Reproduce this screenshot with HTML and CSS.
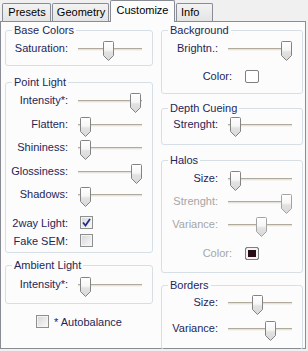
FILE: index.html
```html
<!DOCTYPE html>
<html lang="en">
<head>
    <meta charset="UTF-8">
    <meta name="viewport" content="width=device-width, initial-scale=1.0">
    <title>Customize</title>
    <link rel="stylesheet" href="styles.css">
</head>
<body>
    <!-- shared gradient for slider thumbs -->
    <svg class="defs" width="0" height="0">
        <defs>
            <linearGradient id="thumbFill" x1="0" y1="0" x2="0" y2="1">
                <stop offset="0" stop-color="#ffffff"/>
                <stop offset="0.45" stop-color="#f6f6f6"/>
                <stop offset="0.55" stop-color="#e2e2e2"/>
                <stop offset="1" stop-color="#d8d8d8"/>
            </linearGradient>
        </defs>
    </svg>

    <div class="tabs">
        <div class="tab tab-presets">Presets</div>
        <div class="tab tab-geometry">Geometry</div>
        <div class="tab tab-customize active">Customize</div>
        <div class="tab tab-info">Info</div>
    </div>

    <div class="panel">
        <div class="col col-left">
            <fieldset class="group g-base">
                <legend>Base Colors</legend>
                <div class="row"><label>Saturation:</label><div class="slider" style="--v:0.45"><span class="thumb"><svg width="11" height="20"><path d="M1.5 .5h8a1 1 0 0 1 1 1V14.5l-5 5-5-5V1.5a1 1 0 0 1 1-1z"/></svg></span></div></div>
            </fieldset>

            <fieldset class="group g-point">
                <legend>Point Light</legend>
                <div class="row"><label>Intensity*:</label><div class="slider" style="--v:0.98"><span class="thumb"><svg width="11" height="20"><path d="M1.5 .5h8a1 1 0 0 1 1 1V14.5l-5 5-5-5V1.5a1 1 0 0 1 1-1z"/></svg></span></div></div>
                <div class="row"><label>Flatten:</label><div class="slider" style="--v:0"><span class="thumb"><svg width="11" height="20"><path d="M1.5 .5h8a1 1 0 0 1 1 1V14.5l-5 5-5-5V1.5a1 1 0 0 1 1-1z"/></svg></span></div></div>
                <div class="row"><label>Shininess:</label><div class="slider" style="--v:0"><span class="thumb"><svg width="11" height="20"><path d="M1.5 .5h8a1 1 0 0 1 1 1V14.5l-5 5-5-5V1.5a1 1 0 0 1 1-1z"/></svg></span></div></div>
                <div class="row"><label>Glossiness:</label><div class="slider" style="--v:1"><span class="thumb"><svg width="11" height="20"><path d="M1.5 .5h8a1 1 0 0 1 1 1V14.5l-5 5-5-5V1.5a1 1 0 0 1 1-1z"/></svg></span></div></div>
                <div class="row"><label>Shadows:</label><div class="slider" style="--v:0"><span class="thumb"><svg width="11" height="20"><path d="M1.5 .5h8a1 1 0 0 1 1 1V14.5l-5 5-5-5V1.5a1 1 0 0 1 1-1z"/></svg></span></div></div>
                <div class="checkrow first"><label>2way Light:</label><span class="check checked"><svg width="9" height="9"><path d="M1 4.5l2.5 3L8 1"/></svg></span></div>
                <div class="checkrow"><label>Fake SEM:</label><span class="check"></span></div>
            </fieldset>

            <fieldset class="group g-ambient">
                <legend>Ambient Light</legend>
                <div class="row"><label>Intensity*:</label><div class="slider" style="--v:0"><span class="thumb"><svg width="11" height="20"><path d="M1.5 .5h8a1 1 0 0 1 1 1V14.5l-5 5-5-5V1.5a1 1 0 0 1 1-1z"/></svg></span></div></div>
            </fieldset>

            <div class="autobalance"><span class="check"></span><span>* Autobalance</span></div>
        </div>

        <div class="col col-right">
            <fieldset class="group g-background">
                <legend>Background</legend>
                <div class="row"><label>Brightn.:</label><div class="slider" style="--v:1"><span class="thumb"><svg width="11" height="20"><path d="M1.5 .5h8a1 1 0 0 1 1 1V14.5l-5 5-5-5V1.5a1 1 0 0 1 1-1z"/></svg></span></div></div>
                <div class="colorrow"><label>Color:</label><span class="swatch"></span></div>
            </fieldset>

            <fieldset class="group g-depth">
                <legend>Depth Cueing</legend>
                <div class="row"><label>Strenght:</label><div class="slider" style="--v:0"><span class="thumb"><svg width="11" height="20"><path d="M1.5 .5h8a1 1 0 0 1 1 1V14.5l-5 5-5-5V1.5a1 1 0 0 1 1-1z"/></svg></span></div></div>
            </fieldset>

            <fieldset class="group g-halos">
                <legend>Halos</legend>
                <div class="row"><label>Size:</label><div class="slider" style="--v:0"><span class="thumb"><svg width="11" height="20"><path d="M1.5 .5h8a1 1 0 0 1 1 1V14.5l-5 5-5-5V1.5a1 1 0 0 1 1-1z"/></svg></span></div></div>
                <div class="row disabled"><label>Strenght:</label><div class="slider" style="--v:1"><span class="thumb"><svg width="11" height="20"><path d="M1.5 .5h8a1 1 0 0 1 1 1V14.5l-5 5-5-5V1.5a1 1 0 0 1 1-1z"/></svg></span></div></div>
                <div class="row disabled"><label>Variance:</label><div class="slider" style="--v:0.5"><span class="thumb"><svg width="11" height="20"><path d="M1.5 .5h8a1 1 0 0 1 1 1V14.5l-5 5-5-5V1.5a1 1 0 0 1 1-1z"/></svg></span></div></div>
                <div class="colorrow disabled"><label>Color:</label><span class="swatch dark"></span></div>
            </fieldset>

            <fieldset class="group g-borders">
                <legend>Borders</legend>
                <div class="row"><label>Size:</label><div class="slider" style="--v:0.44"><span class="thumb"><svg width="11" height="20"><path d="M1.5 .5h8a1 1 0 0 1 1 1V14.5l-5 5-5-5V1.5a1 1 0 0 1 1-1z"/></svg></span></div></div>
                <div class="row"><label>Variance:</label><div class="slider" style="--v:0.68"><span class="thumb"><svg width="11" height="20"><path d="M1.5 .5h8a1 1 0 0 1 1 1V14.5l-5 5-5-5V1.5a1 1 0 0 1 1-1z"/></svg></span></div></div>
            </fieldset>
        </div>
    </div>
</body>
</html>
```

FILE: styles.css
```css
body {
    margin: 0;
    background-color: #f0f0f0;
    font-family: "Liberation Sans", Arial, sans-serif;
    font-size: 11px;
    color: #1e2658;
}
.defs {
    position: absolute;
}

/* Tab strip */
.tabs {
    display: flex;
    align-items: flex-end;
    height: 22px;
    padding-left: 2px;
    margin-bottom: -1px;
    position: relative;
    z-index: 1;
}
.tab {
    box-sizing: border-box;
    height: 18px;
    margin-bottom: 1px;
    border: 1px solid #898c95;
    border-bottom: none;
    border-radius: 2px 2px 0 0;
    background: linear-gradient(#f3f3f3, #e4e4e4);
    color: #000;
    line-height: 16px;
    text-align: center;
}
.tab-presets { width: 49px; padding-left: 1px; }
.tab-geometry { width: 57px; margin-left: 1px; padding-left: 1px; }
.tab-customize { width: 65px; margin-left: 1px; }
.tab-info { width: 37px; margin-left: 1px; text-align: left; padding-left: 4px; }
.tab.active {
    height: 22px;
    margin-bottom: 0;
    background: #fcfcfc;
    line-height: 19px;
}

/* Tab page */
.panel {
    box-sizing: border-box;
    width: 306px;
    height: 328px;
    border: 1px solid #898c95;
    background-color: #fcfcfc;
    display: flex;
    gap: 8px;
    padding: 2px 2px 0 4px;
}
.col {
    display: flex;
    flex-direction: column;
}
.col-left { width: 148px; }
.col-right { width: 142px; }

.group {
    margin: 0;
    padding: 0;
    min-width: 0;
    border: 1px solid #d5dfe5;
    border-radius: 3px;
}
.group legend {
    margin-left: 6px;
    padding: 0 2px;
    line-height: 13px;
}

.g-base { padding: 2px 0 2px; }
.g-point { margin-top: 10px; padding: 2px 0 2px; }
.g-point .row { height: 23.5px; }
.g-ambient { margin-top: 6px; padding: 3px 0 4px; }
.g-background { padding: 2px 0 4px; }
.g-depth { margin-top: 8px; padding: 0 0 5px; }
.g-halos { margin-top: 9px; padding: 2px 0 6px; }
.g-halos .row { height: 23px; }
.g-halos .colorrow { margin-top: 2px; }
.g-borders { margin-top: 6px; padding: 1px 0 4px; }
.g-borders .row { height: 26px; }

/* Label + slider rows */
.row {
    display: flex;
    align-items: flex-start;
    height: 24px;
}
.row label {
    flex: none;
    width: 62px;
    margin-right: 10px;
    padding-top: 2px;
    line-height: 15px;
    text-align: right;
}
.col-right .row label { width: 56px; }

.slider {
    flex: none;
    position: relative;
    width: 64px;
    height: 24px;
}
.col-right .slider { width: 64px; }
.slider::before {
    content: "";
    position: absolute;
    left: 0;
    right: 0;
    top: 9px;
    height: 1px;
    border-top: 1px solid #b0a99c;
    border-bottom: 1px solid #f4f3ef;
    background: #e6e3dc;
}
.thumb {
    position: absolute;
    top: 2px;
    left: calc(2px + var(--v) * (100% - 13px));
    width: 11px;
    height: 20px;
}
.thumb svg {
    display: block;
}
.thumb path {
    fill: url(#thumbFill);
    stroke: #838383;
}
.disabled label {
    color: #a6a6a6;
}
.disabled .thumb path {
    stroke: #a3a3a3;
}

/* Checkboxes */
.checkrow {
    display: flex;
    align-items: center;
    height: 18px;
}
.checkrow.first { margin-top: 5px; }
.checkrow label {
    width: 62px;
    margin-right: 12px;
    text-align: right;
}
.check {
    box-sizing: border-box;
    flex: none;
    display: flex;
    align-items: center;
    justify-content: center;
    width: 13px;
    height: 13px;
    border: 1px solid #8e8f8f;
    background: linear-gradient(135deg, #d6d6d6, #fbfbfb);
    box-shadow: inset 0 0 0 1px #f4f4f4;
}
.check svg path {
    fill: none;
    stroke: #21318f;
    stroke-width: 1.8;
}

.autobalance {
    display: flex;
    align-items: center;
    justify-content: center;
    gap: 5px;
    height: 18px;
    margin-top: 9px;
}

/* Colour pickers */
.colorrow {
    display: flex;
    align-items: center;
    height: 26px;
}
.colorrow label {
    width: 70px;
    margin-right: 13px;
    text-align: right;
}
.swatch {
    box-sizing: border-box;
    width: 14px;
    height: 13px;
    border: 1px solid #7f7f7f;
    border-radius: 2px;
    background: #fff;
}
.swatch.dark {
    background: #2a0c17;
    box-shadow: inset 0 0 0 2px #f4f4f4;
}
```
